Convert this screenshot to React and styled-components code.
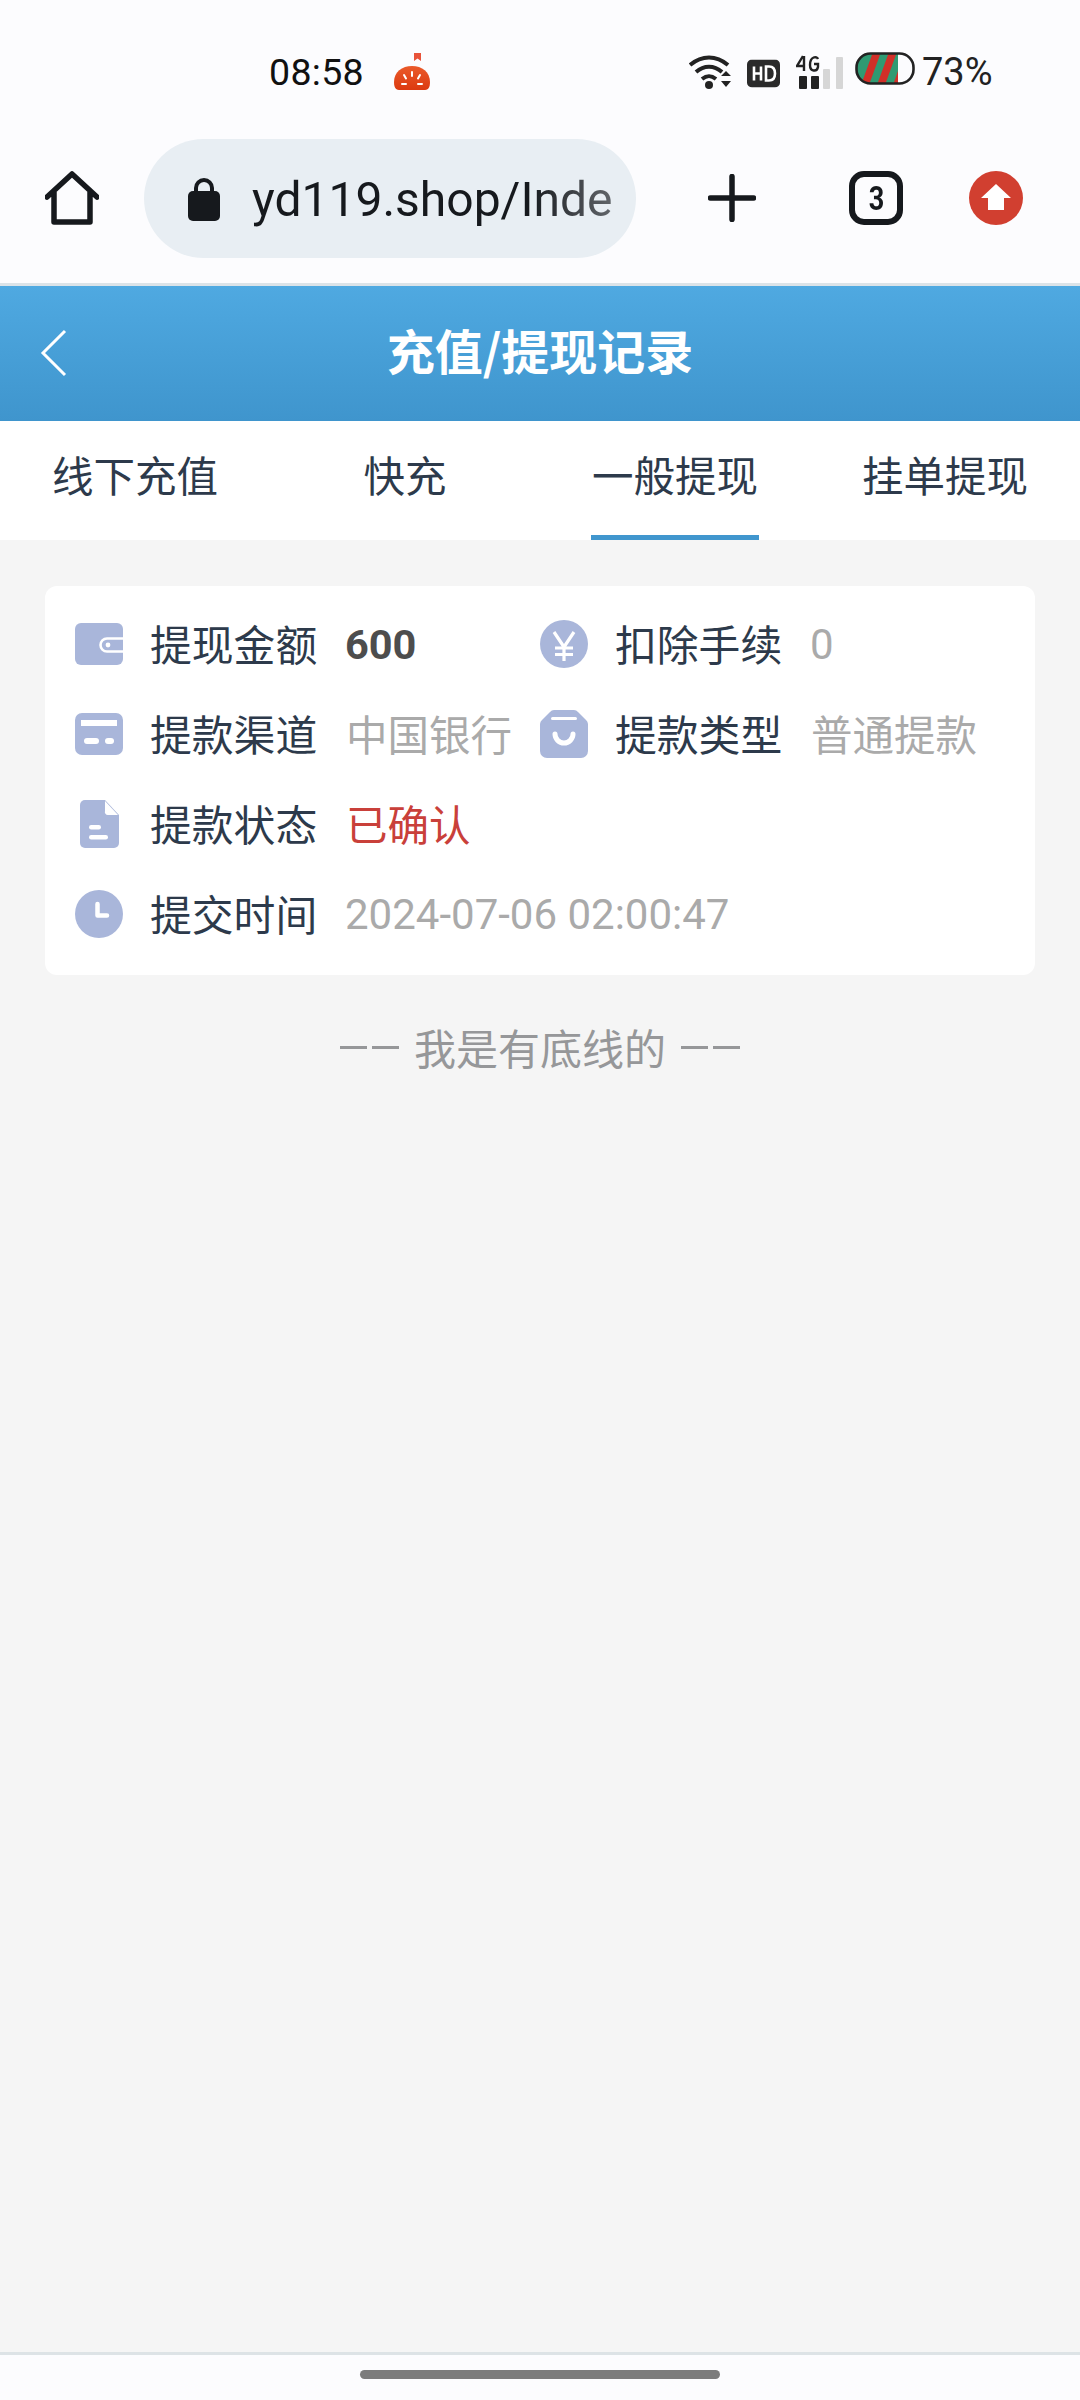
import React from "react";
import styled, { createGlobalStyle } from "styled-components";

const Global = createGlobalStyle`
  html, body { margin: 0; padding: 0; background: #f5f5f5; }
  * { box-sizing: border-box; }
  body { font-family: Roboto, "Noto Sans CJK SC", sans-serif; }
`;

const CJK = `"Noto Sans CJK SC", Roboto, sans-serif`;

const Page = styled.div`
  width: 1080px;
  height: 2400px;
  display: flex;
  flex-direction: column;
  overflow: hidden;
  background: #f5f5f5;
`;

const StatusBar = styled.div`
  height: 113px;
  padding: 30px 87px 0 269px;
  display: flex;
  align-items: center;
  background: #fcfcfe;
  color: #111;
`;

const Clock = styled.span`
  font-size: 37.5px;
  font-weight: 400;
  width: 124px;
  letter-spacing: 0.3px;
`;

const StatusRight = styled.div`
  margin-left: auto;
  display: flex;
  align-items: center;
`;

const Percent = styled.span`
  font-size: 38px;
  color: #222;
  margin-left: 7px;
  width: 71px;
  white-space: nowrap;
`;

const Toolbar = styled.div`
  height: 170px;
  padding: 0 57px 0 45px;
  display: flex;
  align-items: center;
  background: #fcfcfe;
`;

const UrlPill = styled.div`
  width: 492px;
  height: 119px;
  margin-left: 45px;
  padding: 2px 20px 0 44px;
  border-radius: 60px;
  background: #e8eef3;
  display: flex;
  align-items: center;
  gap: 32px;
`;

const UrlText = styled.div`
  flex: 1;
  white-space: nowrap;
  font-size: 48px;
  line-height: 62px;
  padding-top: 2px;
  color: #16191d;
  -webkit-mask-image: linear-gradient(90deg, #000 76%, #000000a0 100%);
  mask-image: linear-gradient(90deg, #000 76%, #000000a0 100%);
`;

const ToolIcons = styled.div`
  flex: 1;
  display: flex;
  align-items: center;
  justify-content: flex-end;
  gap: 66px;
`;

const PlusBox = styled.div`
  display: flex;
  margin-right: 27px;
`;

const TabCount = styled.div`
  width: 54px;
  height: 54px;
  border: 6px solid #16191d;
  border-radius: 15px;
  display: flex;
  align-items: center;
  justify-content: center;
  font-size: 33px;
  font-weight: 700;
  color: #16191d;
`;

const TabDigit = styled.span`
  display: block;
  transform: scaleX(0.82);
`;

const Divider = styled.div`
  height: 3px;
  background: #dbe3e8;
`;

const Header = styled.header`
  height: 135px;
  flex: none;
  display: flex;
  align-items: center;
  justify-content: center;
  padding-bottom: 10px;
  position: relative;
  background: linear-gradient(180deg, #4fa9e1 0%, #3f95cd 100%);
  color: #fff;
  font-family: ${CJK};
  font-size: 48px;
  font-weight: 700;
`;

const BackIcon = styled.svg`
  position: absolute;
  left: 40px;
  top: 42px;
`;

const Tabs = styled.nav`
  height: 119px;
  flex: none;
  display: grid;
  grid-template-columns: repeat(4, 270px);
  background: #fff;
`;

const Tab = styled.div`
  position: relative;
  display: flex;
  align-items: center;
  justify-content: center;
  padding-bottom: 14px;
  font-family: ${CJK};
  font-size: 41.5px;
  color: #2d3a4b;
  &::after {
    content: "";
    display: ${(p) => (p.$active ? "block" : "none")};
    position: absolute;
    bottom: 0;
    left: 51px;
    width: 168px;
    height: 5px;
    background: #4096ce;
  }
`;

const Body = styled.main`
  flex: 1;
  padding: 46px 45px 0;
  background: #f5f5f5;
`;

const Card = styled.section`
  height: 389px;
  padding: 13px 0 0 30px;
  border-radius: 12px;
  background: #fff;
  display: grid;
  grid-template-columns: 465px 1fr;
  grid-auto-rows: 90px;
`;

const Field = styled.div`
  display: flex;
  align-items: center;
  grid-column: ${(p) => (p.$wide ? "1 / -1" : "auto")};
`;

const IconSlot = styled.div`
  width: 48px;
  height: 48px;
  margin-right: 27px;
  flex: none;
  display: flex;
  align-items: center;
  justify-content: center;
`;

const Label = styled.span`
  width: 195px;
  flex: none;
  padding-bottom: 3px;
  font-family: ${CJK};
  font-size: 41.8px;
  color: #2d3a4b;
  white-space: nowrap;
`;

const Value = styled.span`
  padding-bottom: 3px;
  margin-left: 1px;
  font-family: ${CJK};
  font-size: 41.5px;
  color: ${(p) => p.$color || "#aaaaaa"};
  white-space: nowrap;
`;

const Num = styled.span`
  font-family: Roboto, sans-serif;
  font-size: ${(p) => p.$size || 42}px;
  font-weight: ${(p) => (p.$bold ? 700 : 400)};
  color: ${(p) => (p.$bold ? "#4d4d4d" : "#aaaaaa")};
  white-space: nowrap;
`;

const Footnote = styled.div`
  margin-top: 47px;
  display: flex;
  align-items: center;
  justify-content: center;
  gap: 15px;
  font-family: ${CJK};
  font-size: 42px;
  line-height: 50px;
  color: #969799;
`;

const Dashes = styled.span`
  display: flex;
  gap: 5px;
  &::before, &::after {
    content: "";
    display: block;
    width: 27px;
    height: 3px;
    background: #969799;
  }
`;

const BottomNav = styled.div`
  height: 48px;
  flex: none;
  display: flex;
  justify-content: center;
  padding-top: 15px;
  border-top: 3px solid #dde3e6;
  background: #fcfcfe;
`;

const HomeBar = styled.div`
  width: 360px;
  height: 9px;
  border-radius: 5px;
  background: #7c7c7c;
`;

const C = "#a9b6da";

const WalletIcon = () => (
  <svg width="48" height="42" viewBox="0 0 48 42">
    <rect width="48" height="42" rx="6" fill={C} />
    <path d="M48 15.5H32a6.5 6.5 0 0 0 0 13h16" fill="none" stroke="#fff" strokeWidth="2.6" />
    <circle cx="33" cy="22" r="2.4" fill="#fff" />
  </svg>
);
const CardIcon = () => (
  <svg width="48" height="42" viewBox="0 0 48 42">
    <rect width="48" height="42" rx="7" fill={C} />
    <rect x="6" y="7" width="36" height="6" fill="#fff" />
    <rect x="9" y="25" width="15" height="6" rx="3" fill="#fff" />
    <rect x="30" y="25" width="9" height="6" rx="3" fill="#fff" />
  </svg>
);
const DocIcon = () => (
  <svg width="39" height="48" viewBox="0 0 39 48">
    <path d="M5 0H25L39 15V43a5 5 0 0 1-5 5H5a5 5 0 0 1-5-5V5a5 5 0 0 1 5-5Z" fill={C} />
    <path d="M25 1V11a3 3 0 0 0 3 4H38Z" fill="#fff" />
    <rect x="9" y="25" width="12" height="4.5" rx="2.2" fill="#fff" />
    <rect x="9" y="35" width="19" height="4.5" rx="2.2" fill="#fff" />
  </svg>
);
const ClockIcon = () => (
  <svg width="48" height="48" viewBox="0 0 48 48">
    <circle cx="24" cy="24" r="24" fill={C} />
    <path d="M22.5 14V25.5H32" fill="none" stroke="#fff" strokeWidth="4.5" strokeLinecap="round" strokeLinejoin="round" />
  </svg>
);
const YenIcon = () => (
  <svg width="48" height="48" viewBox="0 0 48 48">
    <circle cx="24" cy="24" r="24" fill={C} />
    <path d="M14 12L24 27L34 12M24 27V41M15 28H33M15 34.5H33" fill="none" stroke="#fff" strokeWidth="3.2" />
  </svg>
);
const BagIcon = () => (
  <svg width="48" height="48" viewBox="0 0 48 48">
    <path d="M14 0H34a6 6 0 0 1 4 2L46 10a6 6 0 0 1 2 4V41a7 7 0 0 1-7 7H7a7 7 0 0 1-7-7V14a6 6 0 0 1 2-4L10 2a6 6 0 0 1 4-2Z" fill={C} />
    <rect x="11" y="7" width="26" height="3" rx="1.5" fill="#fff" />
    <path d="M15 24a9 9 0 0 0 18 0" fill="none" stroke="#fff" strokeWidth="5" strokeLinecap="round" />
  </svg>
);

const rows = [
  { icon: <WalletIcon />, label: "提现金额", value: <Num $bold $size={41.5}>600</Num> },
  { icon: <YenIcon />, label: "扣除手续", value: <Num>0</Num> },
  { icon: <CardIcon />, label: "提款渠道", value: <Value>中国银行</Value> },
  { icon: <BagIcon />, label: "提款类型", value: <Value>普通提款</Value> },
  { icon: <DocIcon />, label: "提款状态", value: <Value $color="#c9403a">已确认</Value>, wide: true },
  { icon: <ClockIcon />, label: "提交时间", value: <Num>2024-07-06 02:00:47</Num>, wide: true },
];

const AppGlyph = () => (
  <svg width="38" height="38" viewBox="0 0 38 38" style={{ flex: "none" }}>
    <defs>
      <linearGradient id="appg" x1="0" y1="0" x2="0" y2="1">
        <stop offset="0" stopColor="#ea5a2a" />
        <stop offset="1" stopColor="#dc3a10" />
      </linearGradient>
    </defs>
    <path d="M21 0h7v8l-3.5-2.5L21 8Z" fill="#e8533a" />
    <path d="M6 37C2 37 1 33 1 29 1 19 9 13 19 13s18 6 18 16c0 4-1 8-5 8Z" fill="url(#appg)" />
    <path d="M19 19v4M11 22l2 3.5M27 22l-2 3.5M9 31h4M25 31h4" stroke="#fff" strokeWidth="2" strokeLinecap="round" />
  </svg>
);

const WifiGlyph = () => (
  <svg width="44" height="34" viewBox="0 0 44 34" style={{ marginRight: 14 }}>
    <path d="M1 10C13 0 27 0 39 10M7 17c8-7 18-7 26 0M13 24c5-4 9-4 14 0" fill="none" stroke="#222" strokeWidth="4" />
    <circle cx="20" cy="30" r="4" fill="#222" />
    <path d="M32 21h10l-5-5ZM32 26h10l-5 6Z" fill="#222" />
  </svg>
);

const HdGlyph = () => (
  <svg width="33" height="28" viewBox="0 0 33 28" style={{ marginRight: 16, transform: "translateY(1.5px)" }}>
    <rect width="33" height="28" rx="5" fill="#2a2a2a" />
    <path d="M7 7v14M14 7v14M7 14h7M19 7v14h3c5 0 6-3 6-7s-1-7-6-7Z" fill="none" stroke="#fff" strokeWidth="2.6" />
  </svg>
);

const SignalGlyph = () => (
  <svg width="49" height="34" viewBox="0 0 49 34" style={{ marginRight: 10 }}>
    <rect x="3" y="21" width="8" height="13" rx="1" fill="#222" />
    <rect x="15" y="21" width="8" height="13" rx="1" fill="#222" />
    <rect x="27" y="14" width="7" height="20" rx="1" fill="#d6d6d6" />
    <rect x="40" y="2" width="7" height="32" rx="1" fill="#d6d6d6" />
    <path d="M7 1L1 11H9M8 1V16M22 4c-1-3-8-3-8 6 0 7 7 7 8 2V9h-4" fill="none" stroke="#222" strokeWidth="2.4" />
  </svg>
);

const BatteryGlyph = () => (
  <svg width="60" height="33" viewBox="0 0 60 33" style={{ transform: "translateY(-3px)" }}>
    <defs>
      <clipPath id="bat"><rect x="1.5" y="1.5" width="57" height="30" rx="14" /></clipPath>
    </defs>
    <g clipPath="url(#bat)">
      <rect width="43" height="33" fill="#2f9a72" />
      <path d="M6 33L18 0H26L14 33ZM22 33L34 0H42L30 33ZM38 33L43 19V33Z" fill="#d12f28" />
    </g>
    <rect x="1.5" y="1.5" width="57" height="30" rx="14" fill="none" stroke="#222" strokeWidth="2.6" />
  </svg>
);

const HomeIcon = () => (
  <svg width="54" height="54" viewBox="0 0 54 54" style={{ flex: "none" }}>
    <path d="M2 26L27 3L52 26M9 21V51H45V21" fill="none" stroke="#16191d" strokeWidth="5.5" strokeLinecap="round" strokeLinejoin="round" />
  </svg>
);

const LockIcon = () => (
  <svg width="32" height="44" viewBox="0 0 32 44" style={{ flex: "none" }}>
    <path d="M8 16V11a8 8 0 0 1 16 0V16" fill="none" stroke="#16191d" strokeWidth="4" />
    <rect y="14" width="32" height="30" rx="5" fill="#16191d" />
  </svg>
);

const PlusIcon = () => (
  <svg width="48" height="48" viewBox="0 0 48 48">
    <path d="M24 2.5V45.5M2.5 24H45.5" stroke="#16191d" strokeWidth="5.5" strokeLinecap="round" />
  </svg>
);

const UpdateIcon = () => (
  <svg width="54" height="54" viewBox="0 0 54 54">
    <circle cx="27" cy="27" r="27" fill="#d13f30" />
    <path d="M27 13L42 27H35V39H19V27H12Z" fill="#fff" />
  </svg>
);

export default function App() {
  return (
    <Page>
      <Global />
      <StatusBar>
        <Clock>08:58</Clock>
        <AppGlyph />
        <StatusRight>
          <WifiGlyph />
          <HdGlyph />
          <SignalGlyph />
          <BatteryGlyph />
          <Percent>73%</Percent>
        </StatusRight>
      </StatusBar>
      <Toolbar>
        <HomeIcon />
        <UrlPill>
          <LockIcon />
          <UrlText>yd119.shop/Inde</UrlText>
        </UrlPill>
        <ToolIcons>
          <PlusBox><PlusIcon /></PlusBox>
          <TabCount><TabDigit>3</TabDigit></TabCount>
          <UpdateIcon />
        </ToolIcons>
      </Toolbar>
      <Divider />
      <Header>
        <BackIcon width="28" height="50" viewBox="0 0 28 50">
          <path d="M25 3L3 25L25 47" fill="none" stroke="#fff" strokeWidth="3" />
        </BackIcon>
        充值/提现记录
      </Header>
      <Tabs>
        <Tab>线下充值</Tab>
        <Tab>快充</Tab>
        <Tab $active>一般提现</Tab>
        <Tab>挂单提现</Tab>
      </Tabs>
      <Body>
        <Card>
          {rows.map((r) => (
            <Field key={r.label} $wide={r.wide}>
              <IconSlot>{r.icon}</IconSlot>
              <Label>{r.label}</Label>
              {r.value}
            </Field>
          ))}
        </Card>
        <Footnote>
          <Dashes />
          我是有底线的
          <Dashes />
        </Footnote>
      </Body>
      <BottomNav>
        <HomeBar />
      </BottomNav>
    </Page>
  );
}
